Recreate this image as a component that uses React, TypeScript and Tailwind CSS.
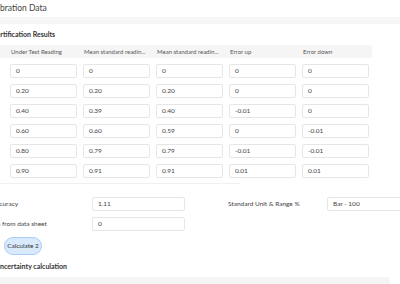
const headers = [
  "Under Test Reading",
  "Mean standard readin...",
  "Mean standard readin...",
  "Error up",
  "Error down",
];

const rows = [
  ["0", "0", "0", "0", "0"],
  ["0.20", "0.20", "0.20", "0", "0"],
  ["0.40", "0.39", "0.40", "-0.01", "0"],
  ["0.60", "0.60", "0.59", "0", "-0.01"],
  ["0.80", "0.79", "0.79", "-0.01", "-0.01"],
  ["0.90", "0.91", "0.91", "0.01", "0.01"],
];

function Field({ value, className = "" }: { value: string; className?: string }) {
  return (
    <div
      className={`h-[14px] flex items-center px-[5px] bg-white border border-[#e6e6e6] rounded-[2px] text-[6.5px] text-[#444] ${className}`}
    >
      {value}
    </div>
  );
}

export default function App() {
  return (
    <div
      className="w-[400px] h-[284px] overflow-hidden bg-white text-[#333]"
      style={{ fontFamily: "Lato, 'Open Sans', sans-serif" }}
    >
      {/* Page header */}
      <div className="h-[17px] flex items-center">
        <span className="-ml-[14px] text-[8.5px] text-[#444]">Calibration Data</span>
      </div>
      <div className="h-[7px] bg-[#f6f6f6]" />

      {/* Certification results */}
      <div className="h-[21px] flex items-center">
        <span className="-ml-[8px] text-[7px] font-bold text-[#333]">Certification Results</span>
      </div>

      <div className="w-[372px]">
        <div className="h-[13px] bg-[#f5f5f5] rounded-r-[3px] grid grid-cols-[67px_67px_67px_67px_67px] gap-x-[6px] pl-[10px] items-center">
          {headers.map((h, i) => (
            <span key={i} className="pl-[1px] text-[6px] text-[#555] whitespace-nowrap">
              {h}
            </span>
          ))}
        </div>
        <div className="flex flex-col gap-[6px] pt-[6px] pb-[5px] pl-[10px]">
          {rows.map((r, i) => (
            <div key={i} className="grid grid-cols-[67px_67px_67px_67px_67px] gap-x-[6px]">
              {r.map((v, j) => (
                <Field key={j} value={v} />
              ))}
            </div>
          ))}
        </div>
        <div className="h-px bg-[#f0f0f0] w-[240px]" />
      </div>

      {/* Accuracy fields */}
      <div className="-ml-[8px] pt-[13px] flex flex-col gap-[6px]">
        <div className="grid grid-cols-[100px_93px_43px_99px_93px] items-center">
          <span className="text-[6.5px] text-[#444]">Accuracy</span>
          <Field value="1.11" className="h-[13px]" />
          <span />
          <span className="text-[6.5px] text-[#444]">Standard Unit &amp; Range %</span>
          <Field value="Bar - 100" className="h-[14px]" />
        </div>
        <div className="grid grid-cols-[100px_93px] items-center">
          <span className="-ml-[22px] text-[6.5px] text-[#444] whitespace-nowrap">
            Resolution from data sheet
          </span>
          <Field value="0" className="h-[13px]" />
        </div>
      </div>

      <div className="flex pl-[4px] pt-[6px]">
        <button className="h-[18px] w-[38px] flex items-center justify-center rounded-full bg-[#d9eafd] border border-[#a9cdf5] text-[6.5px] text-[#333]">
          Calculate 2
        </button>
      </div>

      <div className="h-[22px] flex items-center">
        <span className="-ml-[5px] text-[7px] font-bold text-[#333]">Uncertainty calculation</span>
      </div>
      <div className="h-[8px] w-[390px] bg-[#f5f5f5] rounded-r-[3px]" />
    </div>
  );
}
